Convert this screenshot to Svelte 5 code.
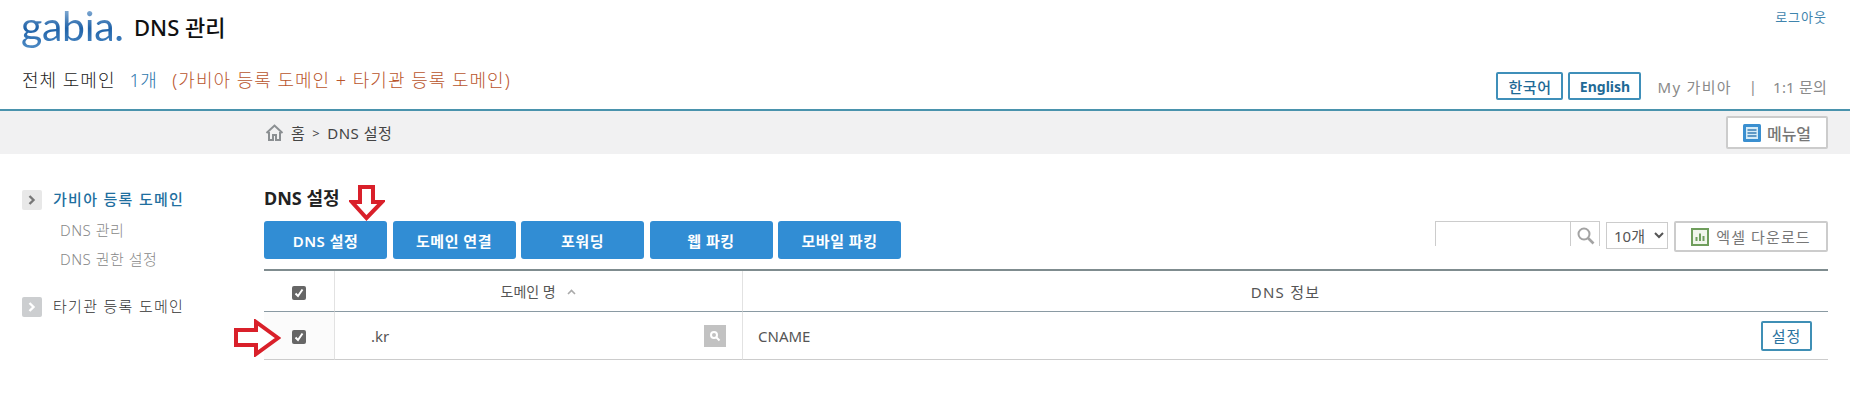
<script>
  const tabs = ['DNS 설정', '도메인 연결', '포워딩', '웹 파킹', '모바일 파킹'];
</script>

<div class="page">
  <header class="top">
    <div class="brand-row">
      <div class="brand">
        <span class="logo">gabia.</span>
        <h1>DNS 관리</h1>
      </div>
      <a class="logout" href="#top">로그아웃</a>
    </div>
    <div class="info-row">
      <p class="summary">
        <span>전체 도메인</span>
        <span class="count">1개</span>
        <span class="note">(가비아 등록 도메인 + 타기관 등록 도메인)</span>
      </p>
      <nav class="util">
        <button class="lang">한국어</button>
        <button class="lang en">English</button>
        <span class="my">My 가비아</span>
        <span class="sep">|</span>
        <span class="ask">1:1 문의</span>
      </nav>
    </div>
  </header>

  <div class="crumbs">
    <div class="trail">
      <svg width="19" height="17" viewBox="0 0 19 17" fill="none" stroke="#8b8f92" stroke-width="2">
        <path d="M1.5 9 9.5 1.5 17.5 9" />
        <path d="M4 8v8h4v-5h3v5h4V8" />
      </svg>
      <span>홈</span>
      <span class="gt">&gt;</span>
      <span>DNS 설정</span>
    </div>
    <button class="manual">
      <svg width="18" height="18" viewBox="0 0 18 18">
        <rect width="18" height="18" rx="1.5" fill="#3a8fd0" />
        <rect x="3" y="3" width="12" height="12" fill="#d6ebf7" />
        <path d="M4.5 6h9M4.5 9h9M4.5 12h9" stroke="#3a7fb5" stroke-width="1.5" />
      </svg>
      메뉴얼
    </button>
  </div>

  <div class="content">
    <aside class="side">
      <div class="group active">
        <span class="chev">
          <svg width="8" height="10" viewBox="0 0 8 10" fill="none" stroke="#777" stroke-width="2.4"><path d="M1.5 1 5.5 5 1.5 9" /></svg>
        </span>
        <span class="label">가비아 등록 도메인</span>
      </div>
      <ul>
        <li>DNS 관리</li>
        <li>DNS 권한 설정</li>
      </ul>
      <div class="group">
        <span class="chev off">
          <svg width="8" height="10" viewBox="0 0 8 10" fill="none" stroke="#fff" stroke-width="2.4"><path d="M1.5 1 5.5 5 1.5 9" /></svg>
        </span>
        <span class="label">타기관 등록 도메인</span>
      </div>
    </aside>

    <main class="main">
      <h2>DNS 설정</h2>
      <svg class="arrow-down" width="36" height="36" viewBox="0 0 36 36">
        <path d="M11 2h13v15h9L17.500 33 3 17h8z" fill="#fff" stroke="#d9202a" stroke-width="4" stroke-linejoin="miter" />
      </svg>

      <div class="toolbar">
        <div class="tabs">
          {#each tabs as tab}
            <button class="tab">{tab}</button>
          {/each}
        </div>
        <div class="tools">
          <div class="search">
            <input type="text" aria-label="검색" />
            <span class="search-btn">
              <svg width="19" height="19" viewBox="0 0 19 19" fill="none" stroke="#a3a3a3">
                <circle cx="8" cy="8" r="5.500" stroke-width="2" />
                <path d="M12 12l5.500 5.500" stroke-width="2.600" />
              </svg>
            </span>
          </div>
          <select aria-label="개수">
            <option>10개</option>
          </select>
          <button class="excel">
            <svg width="18" height="18" viewBox="0 0 18 18">
              <rect x="1" y="1" width="16" height="16" fill="#f1f6ec" stroke="#6f9e5c" stroke-width="2" />
              <path d="M5.500 13V9M9 13V5.500M12.500 13V8" stroke="#6f9e5c" stroke-width="2" />
            </svg>
            엑셀 다운로드
          </button>
        </div>
      </div>

      <table>
        <colgroup>
          <col class="c-check" />
          <col class="c-name" />
          <col />
        </colgroup>
        <thead>
          <tr>
            <th class="check">
              <span class="box"><svg width="10" height="10" viewBox="0 0 10 10" fill="none" stroke="#fff" stroke-width="2"><path d="M1.500 5.500 4 8 8.500 1.500" /></svg></span>
            </th>
            <th class="th-name">
              도메인 명
              <svg class="caret" width="9" height="6" viewBox="0 0 9 6" fill="none" stroke="#aaa" stroke-width="1.600"><path d="M1 5 4.500 1.500 8 5" /></svg>
            </th>
            <th class="th-dns">DNS 정보</th>
          </tr>
        </thead>
        <tbody>
          <tr>
            <td class="check">
              <span class="box"><svg width="10" height="10" viewBox="0 0 10 10" fill="none" stroke="#fff" stroke-width="2"><path d="M1.500 5.500 4 8 8.500 1.500" /></svg></span>
            </td>
            <td>
              <div class="name">
                <span>.kr</span>
                <span class="lookup">
                  <svg width="12" height="12" viewBox="0 0 12 12" fill="none" stroke="#fff" stroke-width="2"><circle cx="5" cy="5" r="3" /><path d="M7.500 7.500 10.500 10.500" /></svg>
                </span>
              </div>
            </td>
            <td>
              <div class="dns">
                <span>CNAME</span>
                <button class="set">설정</button>
              </div>
            </td>
          </tr>
        </tbody>
      </table>

      <svg class="arrow-right" width="47" height="38" viewBox="0 0 47 38">
        <path d="M2 11h20V3l22 16-22 16v-9H2z" fill="#fff" stroke="#d9202a" stroke-width="4" stroke-linejoin="miter" />
      </svg>
    </main>
  </div>
</div>

<style>
  :global(body) {
    margin: 0;
    background: #fff;
    font-family: "Noto Sans", "Noto Sans CJK KR", sans-serif;
    color: #333;
  }

  button {
    font-family: inherit;
    cursor: pointer;
  }

  .page {
    width: 1850px;
  }

  .top {
    height: 109px;
    box-sizing: border-box;
  }

  .brand-row {
    height: 58px;
    display: flex;
    justify-content: space-between;
    padding: 0 23px 0 21px;
  }

  .brand {
    display: flex;
    align-items: flex-start;
    gap: 11px;
  }

  .logo {
    width: 102px;
    font-family: Lato, sans-serif;
    font-size: 41px;
    line-height: 46px;
    margin-top: 3px;
    letter-spacing: -0.3px;
    background: linear-gradient(180deg, #8fb4d8 10%, #1f62a8 55%, #4f8cc6 100%);
    -webkit-background-clip: text;
    background-clip: text;
    color: transparent;
  }

  h1 {
    margin: 12px 0 0;
    font-size: 22px;
    line-height: 30px;
    font-weight: 500;
    color: #111;
  }

  .logout {
    margin-top: 8px;
    height: 18px;
    font-size: 13px;
    line-height: 18px;
    color: #3f84ad;
    text-decoration: none;
    letter-spacing: 1px;
  }

  .info-row {
    display: flex;
    justify-content: space-between;
    padding: 0 23px 0 22px;
  }

  .summary {
    margin: 9px 0 0;
    font-size: 18px;
    line-height: 26px;
    display: flex;
    letter-spacing: 1px;
    font-weight: 300;
    color: #222;
  }

  .count {
    margin-left: 14px;
    letter-spacing: 0.5px;
    color: #2f78ad;
  }

  .note {
    margin-left: 15px;
    color: #b9552c;
  }

  .util {
    display: flex;
    align-items: center;
    height: 28px;
    margin-top: 14px;
    font-size: 15px;
    color: #8a8a8a;
  }

  .lang {
    height: 28px;
    width: 67px;
    padding: 0;
    border: 2px solid #3f8fb9;
    border-radius: 2px;
    background: #fff;
    font-size: 15px;
    font-weight: 500;
    letter-spacing: 0.5px;
    color: #1f6a96;
  }

  .lang.en {
    width: 73px;
    margin-left: 5px;
    font-size: 14px;
    letter-spacing: 0;
    font-weight: 700;
  }

  .my {
    margin-left: 16px;
    letter-spacing: 1.3px;
  }

  .sep {
    margin: 0 16px 0 17px;
  }

  .ask {
    letter-spacing: 0.2px;
  }

  .crumbs {
    height: 43px;
    border-top: 2px solid #4a93ad;
    background: #f1f1f2;
    display: flex;
    align-items: center;
    justify-content: space-between;
    padding: 0 22px 0 265px;
  }

  .trail {
    display: flex;
    align-items: center;
    gap: 7px;
    font-size: 15px;
    letter-spacing: 0.5px;
    color: #444;
  }

  .gt {
    font-size: 13px;
  }

  .manual {
    width: 102px;
    height: 33px;
    box-sizing: border-box;
    padding: 0;
    border: 2px solid #ccc;
    border-radius: 2px;
    background: #fff;
    display: flex;
    align-items: center;
    justify-content: center;
    gap: 6px;
    font-size: 16px;
    font-weight: 500;
    color: #777;
  }

  .content {
    display: grid;
    grid-template-columns: 264px 1fr;
    padding-right: 22px;
  }

  .side {
    padding: 36px 0 0 22px;
  }

  .group {
    display: flex;
    align-items: flex-start;
    gap: 11px;
    height: 20px;
    font-size: 15px;
    letter-spacing: 1.3px;
    color: #333;
  }

  .label {
    line-height: 18px;
    font-weight: 300;
  }

  .group.active {
    color: #1f6f9f;
  }

  .group.active .label {
    font-weight: 500;
  }

  .chev {
    width: 20px;
    height: 20px;
    background: #e8e8e8;
    border-radius: 2px;
    display: flex;
    align-items: center;
    justify-content: center;
  }

  .chev.off {
    background: #ccced0;
  }

  .side ul {
    list-style: none;
    margin: 0;
    padding: 10px 0 19px 38px;
  }

  .side li {
    height: 29px;
    font-size: 15px;
    line-height: 20px;
    font-weight: 300;
    color: #888;
    letter-spacing: 0.5px;
  }

  .main {
    position: relative;
    padding-top: 32px;
  }

  h2 {
    margin: 0 0 11px;
    height: 24px;
    font-size: 18px;
    line-height: 24px;
    font-weight: 700;
    color: #222;
  }

  .arrow-down {
    position: absolute;
    left: 85px;
    top: 31px;
  }

  .arrow-right {
    position: absolute;
    left: -30px;
    top: 165px;
  }

  .toolbar {
    display: flex;
    justify-content: space-between;
    align-items: flex-start;
    height: 38px;
    margin-bottom: 10px;
  }

  .tabs {
    display: flex;
    gap: 5.5px;
  }

  .tab {
    width: 123px;
    height: 38px;
    padding: 0;
    border: 0;
    border-radius: 3px;
    background: #318dd4;
    color: #fff;
    font-size: 15px;
    font-weight: 600;
    letter-spacing: 0.5px;
  }

  .tools {
    display: flex;
    align-items: flex-start;
    gap: 6px;
  }

  .search {
    display: flex;
    height: 25px;
    width: 165px;
    box-sizing: border-box;
    border: 1px solid #ccc;
    border-bottom: 0;
  }

  .search input {
    flex: 1;
    min-width: 0;
    border: 0;
    outline: 0;
    padding: 0;
  }

  .search-btn {
    width: 28px;
    border-left: 1px solid #ccc;
    display: flex;
    align-items: center;
    justify-content: center;
    padding-top: 2px;
  }

  select {
    width: 62px;
    height: 27px;
    margin-top: 1px;
    box-sizing: border-box;
    border: 1px solid #ccc;
    background: #fff;
    font-family: inherit;
    font-size: 15px;
    color: #555;
    padding: 0 0 0 3px;
  }

  .excel {
    width: 154px;
    height: 31px;
    box-sizing: border-box;
    padding: 0;
    border: 2px solid #ccc;
    border-radius: 2px;
    background: #fff;
    display: flex;
    align-items: center;
    justify-content: center;
    gap: 7px;
    font-size: 15px;
    letter-spacing: 1.1px;
    color: #777;
  }

  table {
    width: 100%;
    table-layout: fixed;
    border-collapse: separate;
    border-spacing: 0;
    border-top: 2px solid #7f8c8f;
    font-size: 15px;
  }

  .c-check {
    width: 71px;
  }

  .c-name {
    width: 408px;
  }

  th {
    height: 40px;
    padding: 0;
    font-weight: 400;
    color: #555;
    border-bottom: 1px solid #8a9aa3;
    border-right: 1px solid #e2e2e2;
  }

  .th-name {
    font-size: 14px;
  }

  .th-dns {
    letter-spacing: 1.2px;
  }

  td {
    height: 47px;
    padding: 0;
    color: #555;
    border-bottom: 1px solid #ccc;
    border-right: 1px solid #e2e2e2;
  }

  th:last-child,
  td:last-child {
    border-right: 0;
  }

  .check {
    text-align: center;
    background: #fbfbfb;
  }

  th.check {
    background: #fff;
  }

  .box {
    display: inline-flex;
    width: 14px;
    height: 14px;
    border-radius: 2px;
    background: #666;
    align-items: center;
    justify-content: center;
    vertical-align: middle;
  }

  .caret {
    margin-left: 8px;
    vertical-align: 2px;
  }

  .name {
    display: flex;
    align-items: center;
    justify-content: space-between;
    padding: 0 16px 0 36px;
  }

  .lookup {
    width: 22px;
    height: 22px;
    background: #c2c2c2;
    display: flex;
    align-items: center;
    justify-content: center;
  }

  .dns {
    display: flex;
    align-items: center;
    justify-content: space-between;
    padding: 0 16px 0 15px;
  }

  .set {
    width: 51px;
    height: 30px;
    padding: 0;
    border: 2px solid #3f8fb5;
    border-radius: 2px;
    background: #fff;
    color: #2a73a0;
    font-size: 15px;
    letter-spacing: 1px;
  }
</style>
